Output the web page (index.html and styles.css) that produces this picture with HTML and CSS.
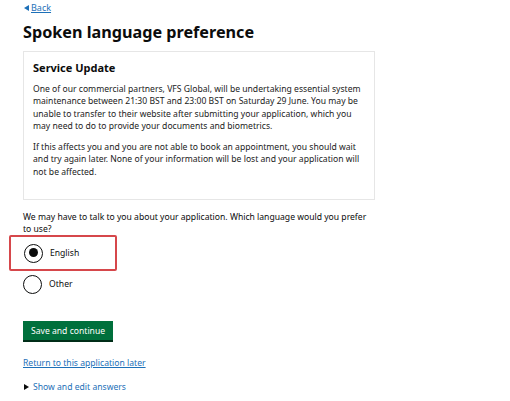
FILE: index.html
```html
<!DOCTYPE html>
<html lang="en">
<head>
  <meta charset="UTF-8">
  <title>Spoken language preference</title>
  <link rel="stylesheet" href="styles.css">
</head>
<body>
  <div id="page">
    <a href="#" class="back-link">Back</a>
    <h1>Spoken language preference</h1>

    <!-- Service notice -->
    <div class="notice">
      <h2>Service Update</h2>
      <p>One of our commercial partners, VFS Global, will be undertaking essential system maintenance between 21:30 BST and 23:00 BST on Saturday 29 June. You may be unable to transfer to their website after submitting your application, which you may need to do to provide your documents and biometrics.</p>
      <p>If this affects you and you are not able to book an appointment, you should wait and try again later. None of your information will be lost and your application will not be affected.</p>
    </div>

    <p class="question">We may have to talk to you about your application. Which language would you prefer to use?</p>

    <div class="radios">
      <label class="radio highlight">
        <span class="circle checked"></span>
        <span>English</span>
      </label>
      <label class="radio">
        <span class="circle"></span>
        <span>Other</span>
      </label>
    </div>

    <button class="save-btn">Save and continue</button>
    <a href="#" class="later-link">Return to this application later</a>
    <div class="details">Show and edit answers</div>
  </div>
</body>
</html>
```

FILE: styles.css
```css
body {
  margin: 0;
  font-family: "Noto Sans", Arial, sans-serif;
  color: #0b0c0c;
  background-color: #fff;
}
#page {
  padding: 2px 0 0 23px;
  width: 352px;
}
.back-link {
  display: block;
  width: fit-content;
  font-size: 9px;
  line-height: 12px;
  color: #1d70b8;
  padding-left: 8px;
  position: relative;
}
.back-link::before {
  content: "";
  position: absolute;
  left: 1px;
  top: 3px;
  border-style: solid;
  border-width: 3px 5px 3px 0;
  border-color: transparent #1d70b8 transparent transparent;
}
h1 {
  font-size: 16.2px;
  line-height: 24px;
  font-weight: 700;
  margin: 6px 0 7px;
}
.notice {
  border: 1px solid #e6e6e6;
  padding: 7px 11px 21px 9px;
}
.notice h2 {
  font-size: 11px;
  line-height: 14px;
  margin: 2px 0 8px;
}
.notice p {
  font-size: 8.6px;
  line-height: 12.3px;
  color: #222;
  margin: 0 0 9px;
}
.notice p:last-child {
  margin-bottom: 0;
}
.question {
  font-size: 8.6px;
  line-height: 12px;
  margin: 11px 0 0;
}
.radios {
  display: flex;
  flex-direction: column;
  gap: 6px;
}
.radio {
  display: flex;
  align-items: center;
  gap: 7px;
  font-size: 8.6px;
  height: 24px;
}
.highlight {
  margin-left: -14px;
  padding: 4px 0 4px 13px;
  width: 91px;
  border: 2px solid #d6474b;
  border-radius: 2px;
  margin-bottom: -5px;
}
.circle {
  width: 19px;
  height: 19px;
  border: 1.5px solid #0b0c0c;
  border-radius: 50%;
  box-sizing: border-box;
  position: relative;
  flex: none;
}
.circle.checked::after {
  content: "";
  position: absolute;
  left: 3.5px;
  top: 3.5px;
  width: 9px;
  height: 9px;
  border-radius: 50%;
  background: #0b0c0c;
}
.save-btn {
  display: block;
  margin-top: 25px;
  background-color: #00703c;
  color: #fff;
  border: none;
  border-bottom: 2px solid #002d18;
  font-family: inherit;
  font-size: 8.6px;
  padding: 4px 8px 3px;
  height: 21px;
}
.later-link {
  display: inline-block;
  margin-top: 15px;
  font-size: 8.6px;
  color: #1d70b8;
}
.details {
  margin-top: 10px;
  font-size: 8.6px;
  color: #1d70b8;
  padding-left: 10px;
  position: relative;
}
.details::before {
  content: "";
  position: absolute;
  left: 1px;
  top: 3px;
  border-style: solid;
  border-width: 3px 0 3px 5px;
  border-color: transparent transparent transparent #0b0c0c;
}
```
